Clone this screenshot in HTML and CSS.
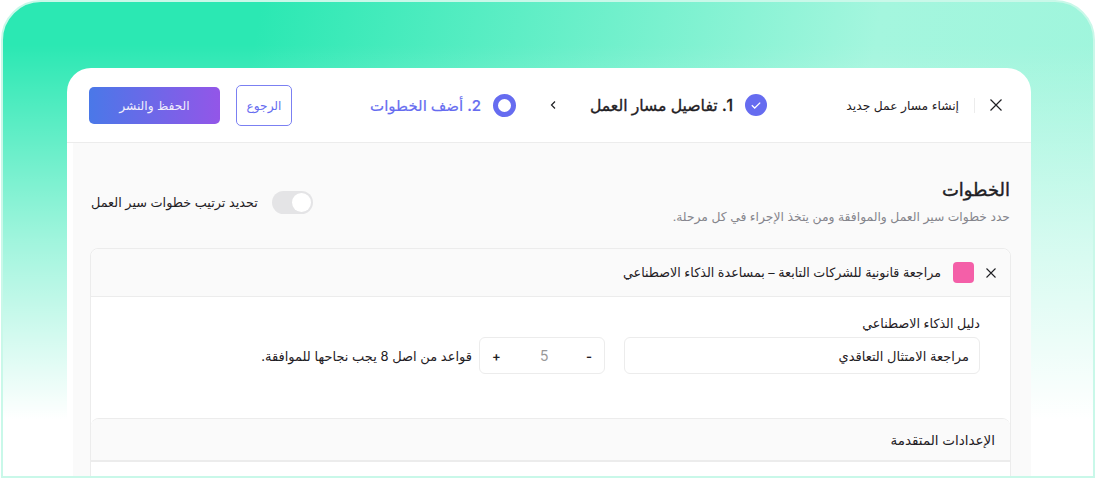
FILE: index.html
```html
<!DOCTYPE html>
<html lang="ar" dir="rtl">
<head>
    <meta charset="UTF-8">
    <title>إنشاء مسار عمل جديد</title>
    <link rel="stylesheet" href="styles.css">
</head>
<body>
    <div class="frame">
        <div class="card">
            <div class="topbar">
                <div class="topbar-title">
                    <svg class="close-icon" width="12" height="12" viewBox="0 0 12 12"><path d="M.5 .5L11.5 11.5M11.5 .5L.5 11.5" stroke="#1f2024" stroke-width="1.2" fill="none"/></svg>
                    <span class="divider"></span>
                    <span>إنشاء مسار عمل جديد</span>
                </div>
                <div class="steps">
                    <div class="step step-done">
                        <svg width="22" height="22" viewBox="0 0 22 22"><circle cx="11" cy="11" r="11" fill="#666cf0"/><path d="M6.8 11.2L9.7 14L15.2 8.6" stroke="#fff" stroke-width="1.3" fill="none"/></svg>
                        <span>1. تفاصيل مسار العمل</span>
                    </div>
                    <svg class="chevron" width="8" height="10" viewBox="0 0 8 10"><path d="M6 1.5L2.5 5L6 8.5" stroke="#1f2024" stroke-width="1.2" fill="none"/></svg>
                    <div class="step step-active">
                        <svg width="23" height="23" viewBox="0 0 23 23"><circle cx="11.5" cy="11.5" r="9" fill="none" stroke="#666cf0" stroke-width="5"/></svg>
                        <span>2. أضف الخطوات</span>
                    </div>
                </div>
                <div class="actions">
                    <button class="btn-back">الرجوع</button>
                    <button class="btn-save">الحفظ والنشر</button>
                </div>
            </div>
            <div class="content">
                <div class="section-head">
                    <div>
                        <h1>الخطوات</h1>
                        <p>حدد خطوات سير العمل والموافقة ومن يتخذ الإجراء في كل مرحلة.</p>
                    </div>
                    <div class="toggle-row">
                        <span class="toggle"><span class="knob"></span></span>
                        <span>تحديد ترتيب خطوات سير العمل</span>
                    </div>
                </div>
                <div class="panel">
                    <div class="panel-head">
                        <svg width="10" height="10" viewBox="0 0 10 10"><path d="M.5 .5L9.5 9.5M9.5 .5L.5 9.5" stroke="#1f2024" stroke-width="1.1" fill="none"/></svg>
                        <span class="swatch"></span>
                        <span>مراجعة قانونية للشركات التابعة – بمساعدة الذكاء الاصطناعي</span>
                    </div>
                    <div class="panel-body">
                        <div class="field">
                            <label>دليل الذكاء الاصطناعي</label>
                            <div class="input">مراجعة الامتثال التعاقدي</div>
                        </div>
                        <div class="rule">
                            <div class="stepper"><b>-</b><span>5</span><b>+</b></div>
                            <span>قواعد من اصل 8 يجب نجاحها للموافقة.</span>
                        </div>
                    </div>
                    <div class="advanced">
                        <div class="advanced-head">الإعدادات المتقدمة</div>
                        <div class="advanced-body"></div>
                    </div>
                </div>
            </div>
        </div>
    </div>
</body>
</html>
```

FILE: styles.css
```css
html, body {
    margin: 0;
    padding: 0;
    height: 478px;
    overflow: hidden;
    background-color: #ffffff;
}

body {
    font-family: "Inter", "Noto Sans", "DejaVu Sans", sans-serif;
    color: #1f2024;
}

.frame {
    box-sizing: border-box;
    height: 478px;
    margin: 0 1px;
    padding: 66px 62px 0 64px;
    border: 2px solid #c9f8e9;
    border-radius: 40px 40px 0 0;
    overflow: hidden;
    background:
        linear-gradient(180deg, rgba(255,255,255,0) 9%, rgba(255,255,255,.55) 50%, #ffffff 88%),
        linear-gradient(100deg, #2be8b3 5%, #2be8b3 22%, #a4f6de 75%, #9ef5dc 100%);
}

.card {
    height: 500px;
    background-color: #ffffff;
    border-radius: 24px 24px 0 0;
    overflow: hidden;
}

.topbar {
    height: 74px;
    display: flex;
    align-items: center;
    padding: 0 29px 0 22px;
    border-bottom: 1px solid #ececec;
}

.topbar-title {
    display: flex;
    align-items: center;
    font-size: 12.3px;
    width: 186px;
}

.close-icon {
    flex: none;
}

.divider {
    width: 1px;
    height: 15px;
    background-color: #ececec;
    margin: 0 15px;
}

.steps {
    display: flex;
    align-items: center;
    gap: 33px;
    margin-right: 49px;
}

.step {
    display: flex;
    align-items: center;
    gap: 12px;
    font-size: 15px;
    font-weight: 500;
}

.step-done span {
    font-size: 15.7px;
    -webkit-text-stroke: .35px #1f2024;
}

.step-active {
    color: #666cf0;
    -webkit-text-stroke: .2px #666cf0;
}

.actions {
    display: flex;
    align-items: center;
    gap: 16px;
    margin-right: auto;
}

.actions button {
    font-family: inherit;
    font-size: 12.2px;
    border-radius: 5px;
    padding: 0;
}

.btn-back {
    width: 56px;
    height: 41px;
    background-color: #ffffff;
    color: #666cf0;
    border: 1px solid #7b80f2;
}

.btn-save {
    width: 131px;
    height: 37px;
    color: #f1eefc;
    border: none;
    background: linear-gradient(to right, #4a78e8, #9356e8);
}

.content {
    height: 400px;
    margin-left: 6px;
    background-color: #fafafa;
    padding: 36px 20px 0 17px;
}

.section-head {
    display: flex;
    justify-content: space-between;
    align-items: center;
    margin-bottom: 23px;
    padding-left: 1px;
    padding-right: 1px;
}

h1 {
    margin: 0 0 8px;
    font-size: 18px;
    line-height: 22px;
    font-weight: 500;
    -webkit-text-stroke: .4px #1f2024;
}

.section-head p {
    margin: 0;
    font-size: 12.35px;
    line-height: 16px;
    color: #85858c;
}

.toggle-row {
    display: flex;
    align-items: center;
    gap: 14px;
    font-size: 12.8px;
}

.toggle {
    width: 41px;
    height: 23px;
    border-radius: 12px;
    background-color: #e4e4e6;
    display: flex;
    align-items: center;
    padding: 0 2px;
    box-sizing: border-box;
}

.knob {
    width: 19px;
    height: 19px;
    border-radius: 50%;
    background-color: #ffffff;
}

.panel {
    border: 1px solid #ececec;
    border-radius: 8px 8px 0 0;
    background-color: #ffffff;
}

.panel-head {
    height: 47px;
    display: flex;
    align-items: center;
    padding: 0 14px;
    font-size: 12.7px;
    background-color: #fafafa;
    border-bottom: 1px solid #ececec;
    border-radius: 8px 8px 0 0;
}

.swatch {
    width: 21px;
    height: 21px;
    border-radius: 4px;
    background-color: #f45fa8;
    margin: 0 12px;
}

.panel-body {
    display: flex;
    align-items: flex-start;
    gap: 19px;
    padding: 19px 30px 0;
    height: 121px;
    box-sizing: border-box;
    font-size: 13px;
}

.field label {
    display: block;
    font-size: 12.7px;
    margin-bottom: 6px;
}

.input {
    width: 356px;
    height: 37px;
    box-sizing: border-box;
    border: 1px solid #ececec;
    border-radius: 6px;
    padding: 0 10px;
    display: flex;
    align-items: center;
}

.rule {
    display: flex;
    align-items: center;
    gap: 7px;
    margin-top: 21px;
}

.stepper {
    width: 126px;
    height: 37px;
    box-sizing: border-box;
    border: 1px solid #ececec;
    border-radius: 6px;
    display: flex;
    align-items: center;
    justify-content: space-between;
    padding: 0 12px;
    color: #999;
}

.stepper span {
    font-size: 14px;
    margin-left: 2px;
}

.stepper b {
    color: #1f2024;
    font-weight: 600;
}

.advanced {
    border-top: 1px solid #ececec;
    border-radius: 8px 8px 0 0;
}

.advanced-head {
    height: 41px;
    display: flex;
    align-items: center;
    padding: 0 15px;
    font-size: 13.5px;
    font-weight: 500;
    background-color: #fafafa;
    border-bottom: 2px solid #ececec;
    border-radius: 8px 8px 0 0;
}

.advanced-body {
    height: 40px;
}
```
